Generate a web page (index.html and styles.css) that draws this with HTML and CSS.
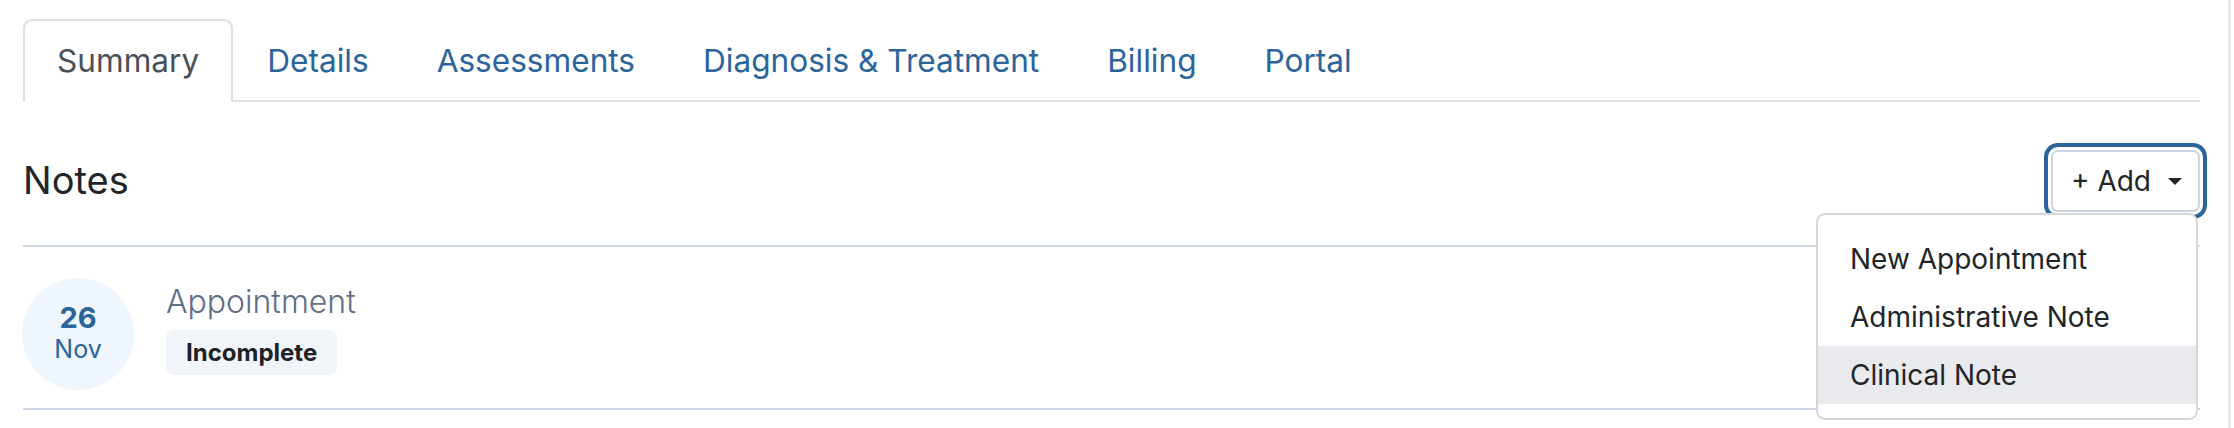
FILE: index.html
```html
<!DOCTYPE html>
<html lang="en">
<head>
<meta charset="utf-8">
<title>Notes</title>
<link rel="stylesheet" href="styles.css">
</head>
<body>
<div class="page">
  <main class="main">
    <nav class="tabs">
      <a class="tab active" href="#">Summary</a>
      <a class="tab" href="#">Details</a>
      <a class="tab" href="#">Assessments</a>
      <a class="tab" href="#">Diagnosis &amp; Treatment</a>
      <a class="tab" href="#">Billing</a>
      <a class="tab" href="#">Portal</a>
    </nav>

    <section class="notes">
      <header class="notes-head">
        <h2 class="notes-title">Notes</h2>
        <div class="add-wrap">
          <button class="add-btn" type="button"><span>+ Add</span><span class="caret"></span></button>
          <ul class="menu">
            <li class="menu-item">New Appointment</li>
            <li class="menu-item">Administrative Note</li>
            <li class="menu-item hover">Clinical Note</li>
          </ul>
        </div>
      </header>

      <div class="note-row">
        <div class="date">
          <span class="day">26</span>
          <span class="month">Nov</span>
        </div>
        <div class="note-info">
          <div class="note-type">Appointment</div>
          <span class="badge">Incomplete</span>
        </div>
      </div>
    </section>
  </main>
  <div class="strip"></div>
</div>
</body>
</html>
```

FILE: styles.css
```css
* { box-sizing: border-box; }

html, body {
  margin: 0;
  padding: 0;
  background: #ffffff;
}

body {
  font-family: Inter, "Noto Sans", sans-serif;
  color: #212529;
}

.page {
  display: flex;
  height: 428px;
  overflow: hidden;
}

.main {
  width: 2200px;
  padding: 19px 0 0 23px;
}

.strip {
  width: 3px;
  margin-left: 28px;
  background: #e8e8e8;
  height: 428px;
}

/* Tabs */
.tabs {
  display: flex;
  align-items: flex-start;
  border-bottom: 2px solid #dee1e6;
}

.tab {
  display: flex;
  align-items: center;
  height: 81px;
  padding: 0 32px;
  border: 2px solid transparent;
  border-bottom: none;
  border-radius: 9px 9px 0 0;
  font-size: 31.6px;
  color: #2b649b;
  text-decoration: none;
  white-space: nowrap;
}

.tab.active {
  color: #495057;
  border-color: #dee1e6;
  background: #fff;
  height: 83px;
  padding-bottom: 2px;
  margin-bottom: -2px;
  position: relative;
  z-index: 1;
}

/* Notes header */
.notes-head {
  display: flex;
  align-items: center;
  justify-content: space-between;
  padding: 48px 0 33px;
  border-bottom: 2px solid #cdd6e2;
}

.notes-title {
  margin: 0;
  font-size: 38px;
  font-weight: 400;
  color: #212529;
  line-height: 1.2;
}

.add-wrap {
  position: relative;
}

.add-btn {
  display: flex;
  align-items: center;
  gap: 17px;
  height: 62px;
  padding: 0 16px 0 18px;
  border: 2px solid #cbd4e0;
  border-radius: 7px;
  background: #fff;
  font-family: Inter, "Noto Sans", sans-serif;
  font-size: 28px;
  color: #212529;
  white-space: nowrap;
  box-shadow: 0 0 0 3px #fff, 0 0 0 7px #2b649b;
}

.caret {
  width: 0;
  height: 0;
  border-left: 7.5px solid transparent;
  border-right: 7.5px solid transparent;
  border-top: 7px solid #212529;
}

.menu {
  position: absolute;
  top: 63px;
  right: 2px;
  width: 382px;
  margin: 0;
  padding: 15px 0 14px;
  list-style: none;
  background: #fff;
  border: 2px solid #d3d6db;
  border-radius: 9px;
  z-index: 5;
}

.menu-item {
  height: 58px;
  display: flex;
  align-items: center;
  padding: 0 32px;
  font-size: 28px;
  color: #212529;
  white-space: nowrap;
}

.menu-item.hover {
  background: #e9eaee;
}

/* Note row */
.note-row {
  display: flex;
  align-items: flex-start;
  gap: 32px;
  padding: 31px 0 18px;
  border-bottom: 2px solid #cdd6e2;
}

.date {
  width: 112px;
  height: 112px;
  margin-left: -1px;
  border-radius: 50%;
  background: #eff6fd;
  display: flex;
  flex-direction: column;
  align-items: center;
  justify-content: center;
  padding-bottom: 2px;
  color: #2b649b;
}

.day {
  font-size: 29px;
  font-weight: 700;
  line-height: 1.1;
}

.month {
  font-size: 25px;
  line-height: 1.2;
}

.note-info {
  display: flex;
  flex-direction: column;
  align-items: flex-start;
  padding-top: 4px;
}

.note-type {
  font-size: 32px;
  font-weight: 300;
  color: #5f6e87;
  margin-bottom: 9px;
}

.badge {
  font-size: 24px;
  font-weight: 700;
  color: #1e2125;
  background: #f1f4f8;
  border-radius: 8px;
  padding: 8px 20px;
}
```
